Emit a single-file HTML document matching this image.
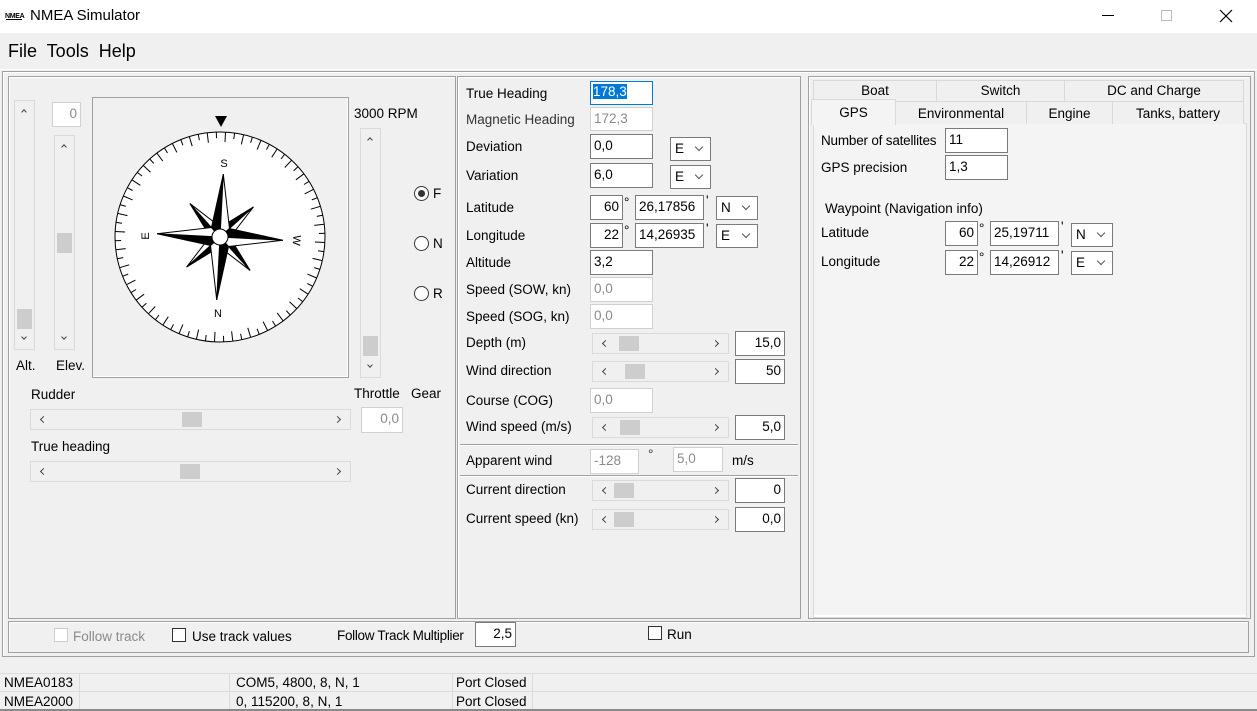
<!DOCTYPE html>
<html><head><meta charset="utf-8"><style>
*{box-sizing:border-box;margin:0;padding:0}
body{width:1257px;height:711px;overflow:hidden;background:#f0f0f0;font-family:"Liberation Sans",sans-serif;font-size:13.5px;color:#000;position:relative}
.a{position:absolute}
.t{position:absolute;white-space:nowrap;line-height:16px}
.in{position:absolute;background:#fff;border:1px solid #7a7a7a;padding:0 3px;line-height:21px;white-space:nowrap;overflow:hidden}
.dis{border-color:#d0d0d0;color:#8a8a8a}
.r{text-align:right}
.cb{position:absolute;background:#fff;border:1px solid #7a7a7a;padding:0 4px;line-height:21px}
.cb:after{content:"";position:absolute;right:8px;top:6px;width:5px;height:5px;border-right:1px solid #555;border-bottom:1px solid #555;transform:rotate(45deg)}
.hs{position:absolute;height:21px;background:#f0f0f0;border:1px solid #dadada}
.hs .th{position:absolute;top:2px;width:20px;height:15px;background:#cdcdcd}
.hs:before{content:"";position:absolute;left:10px;top:7px;width:4px;height:4px;border-left:1.3px solid #444;border-bottom:1.3px solid #444;transform:rotate(45deg)}
.hs:after{content:"";position:absolute;right:10px;top:7px;width:4px;height:4px;border-right:1.3px solid #444;border-top:1.3px solid #444;transform:rotate(45deg)}
.vs{position:absolute;width:21px;background:#f0f0f0;border:1px solid #dadada}
.vs .th{position:absolute;left:2px;width:15px;height:20px;background:#cdcdcd}
.vs .u,.vs .d{position:absolute;left:7px;width:4px;height:4px;border-left:1.3px solid #444;border-top:1.3px solid #444}
.vs .u{transform:rotate(45deg)}
.vs .d{transform:rotate(225deg)}
.fr{position:absolute;border:1px solid #a0a0a0;box-shadow:inset 1px 1px 0 #fff}
.tab{position:absolute;border:1px solid #d9d9d9;border-bottom:none;background:#f0f0f0;text-align:center;line-height:20px}
.chk{position:absolute;width:14px;height:14px;background:#fff;border:1px solid #333}
.rad{position:absolute;width:15px;height:15px;border:1px solid #333;border-radius:50%;background:#fff}
</style></head><body>
<div class="a" style="left:0;top:0;width:1257px;height:33px;background:#fff"></div>
<div class="t" style="left:5px;top:9px;font-size:7px;font-weight:bold;letter-spacing:-0.3px">NMEA</div>
<div class="a" style="left:6px;top:19px;width:16px;height:1px;background:#000"></div>
<div class="t" style="left:30px;top:8px;font-size:15px">NMEA Simulator</div>
<div class="a" style="left:1102px;top:15px;width:12px;height:1px;background:#000"></div>
<div class="a" style="left:1161px;top:10px;width:11px;height:11px;border:1px solid #bbb"></div>
<svg class="a" style="left:1219px;top:9px" width="14" height="14"><path d="M1 1L13 13M13 1L1 13" stroke="#000" stroke-width="1.2"/></svg>
<div class="t" style="left:8px;top:41px;font-size:18px;line-height:20px">File&nbsp; Tools&nbsp; Help</div>
<div class="a" style="left:0;top:69px;width:1257px;height:1px;background:#fff"></div>
<div class="fr" style="left:2px;top:71px;width:1253px;height:586px"></div>
<div class="fr" style="left:8px;top:76px;width:448px;height:543px"></div>
<div class="vs" style="left:14px;top:100px;height:250px"><div class="u" style="top:9px"></div><div class="th" style="top:208px"></div><div class="d" style="top:234px"></div></div>
<div class="in dis r" style="left:52px;top:102px;width:29px;height:25px">0</div>
<div class="vs" style="left:54px;top:135px;height:215px"><div class="u" style="top:9px"></div><div class="th" style="top:97px"></div><div class="d" style="top:199px"></div></div>
<div class="t" style="left:16px;top:358px">Alt.</div>
<div class="t" style="left:56px;top:358px">Elev.</div>
<div class="a" style="left:92px;top:97px;width:257px;height:281px;border:1px solid #a0a0a0;box-shadow:inset -1px -1px 0 #fff"></div>
<svg class="a" style="left:92px;top:97px" width="257" height="281" viewBox="92 97 257 281">
<polygon points="215,116 227,116 221,127" fill="#000"/>
<circle cx="220" cy="237" r="105" fill="#fff" stroke="#000" stroke-width="1"/>
<g id="ticks" stroke="#000" stroke-width="1"></g>
<text x="224" y="167" font-size="11" text-anchor="middle" font-family="Liberation Sans">S</text>
<text x="218" y="317" font-size="11" text-anchor="middle" font-family="Liberation Sans">N</text>
<text transform="translate(149,236) rotate(-90)" font-size="11" text-anchor="middle" font-family="Liberation Sans">E</text>
<text transform="translate(293,240) rotate(95)" font-size="11" text-anchor="middle" font-family="Liberation Sans">W</text>
<g transform="translate(220,237) rotate(183)" stroke="#000" stroke-width="1">
<g id="rose"></g>
<circle r="8" fill="#fff"/>
</g>
</svg>
<div class="t" style="left:354px;top:106px">3000 RPM</div>
<div class="vs" style="left:360px;top:128px;height:250px"><div class="u" style="top:9px"></div><div class="th" style="top:207px"></div><div class="d" style="top:234px"></div></div>
<div class="rad" style="left:414px;top:186px"></div><div class="a" style="left:418px;top:190px;width:7px;height:7px;border-radius:50%;background:#333"></div>
<div class="t" style="left:433px;top:186px">F</div>
<div class="rad" style="left:414px;top:236px"></div><div class="t" style="left:433px;top:236px">N</div>
<div class="rad" style="left:414px;top:286px"></div><div class="t" style="left:433px;top:286px">R</div>
<div class="t" style="left:354px;top:386px">Throttle</div><div class="t" style="left:411px;top:386px">Gear</div>
<div class="t" style="left:31px;top:387px">Rudder</div>
<div class="hs" style="left:30px;top:409px;width:321px"><div class="th" style="left:151px"></div></div>
<div class="in dis r" style="left:361px;top:407px;width:42px;height:26px">0,0</div>
<div class="t" style="left:31px;top:439px">True heading</div>
<div class="hs" style="left:30px;top:461px;width:321px"><div class="th" style="left:149px"></div></div>
<div class="fr" style="left:457px;top:76px;width:344px;height:543px"></div>
<div class="t" style="left:466px;top:86px">True Heading</div>
<div class="in" style="left:590px;top:81px;width:63px;height:24px;border-color:#0078d7;line-height:20px;padding-left:2px"><span style="background:#0078d7;color:#fff">178,3</span></div>
<div class="t" style="left:466px;top:112px;color:#333">Magnetic Heading</div>
<div class="in dis" style="left:590px;top:107px;width:63px;height:24px">172,3</div>
<div class="t" style="left:466px;top:139px">Deviation</div>
<div class="in" style="left:590px;top:134px;width:63px;height:25px">0,0</div>
<div class="cb" style="left:670px;top:137px;width:41px;height:24px">E</div>
<div class="t" style="left:466px;top:168px">Variation</div>
<div class="in" style="left:590px;top:163px;width:63px;height:25px">6,0</div>
<div class="cb" style="left:670px;top:165px;width:41px;height:24px">E</div>
<div class="t" style="left:466px;top:200px">Latitude</div>
<div class="in r" style="left:590px;top:195px;width:33px;height:25px">60</div><div class="t" style="left:624px;top:195px">°</div>
<div class="in" style="left:635px;top:195px;width:69px;height:25px">26,17856</div><div class="t" style="left:706px;top:193px">'</div>
<div class="cb" style="left:716px;top:196px;width:42px;height:24px">N</div>
<div class="t" style="left:466px;top:228px">Longitude</div>
<div class="in r" style="left:590px;top:223px;width:33px;height:25px">22</div><div class="t" style="left:624px;top:223px">°</div>
<div class="in" style="left:635px;top:223px;width:69px;height:25px">14,26935</div><div class="t" style="left:706px;top:221px">'</div>
<div class="cb" style="left:716px;top:224px;width:42px;height:24px">E</div>
<div class="t" style="left:466px;top:255px">Altitude</div>
<div class="in" style="left:590px;top:250px;width:63px;height:25px">3,2</div>
<div class="t" style="left:466px;top:282px">Speed (SOW, kn)</div>
<div class="in dis" style="left:590px;top:277px;width:63px;height:25px">0,0</div>
<div class="t" style="left:466px;top:309px">Speed (SOG, kn)</div>
<div class="in dis" style="left:590px;top:304px;width:63px;height:25px">0,0</div>
<div class="t" style="left:466px;top:335px">Depth (m)</div>
<div class="hs" style="left:592px;top:333px;width:137px"><div class="th" style="left:26px"></div></div>
<div class="in r" style="left:735px;top:331px;width:50px;height:25px">15,0</div>
<div class="t" style="left:466px;top:363px">Wind direction</div>
<div class="hs" style="left:592px;top:361px;width:137px"><div class="th" style="left:32px"></div></div>
<div class="in r" style="left:735px;top:359px;width:50px;height:25px">50</div>
<div class="t" style="left:466px;top:393px">Course (COG)</div>
<div class="in dis" style="left:590px;top:388px;width:63px;height:25px">0,0</div>
<div class="t" style="left:466px;top:419px">Wind speed (m/s)</div>
<div class="hs" style="left:592px;top:417px;width:137px"><div class="th" style="left:27px"></div></div>
<div class="in r" style="left:735px;top:415px;width:50px;height:25px">5,0</div>
<div class="a" style="left:460px;top:444px;width:338px;height:2px;border-top:1px solid #a0a0a0;border-bottom:1px solid #fff"></div>
<div class="t" style="left:466px;top:453px">Apparent wind</div>
<div class="in dis" style="left:590px;top:449px;width:49px;height:25px">-128</div>
<div class="t" style="left:648px;top:447px;color:#333">°</div>
<div class="in dis" style="left:673px;top:447px;width:50px;height:25px">5,0</div>
<div class="t" style="left:732px;top:453px">m/s</div>
<div class="a" style="left:460px;top:475px;width:338px;height:2px;border-top:1px solid #a0a0a0;border-bottom:1px solid #fff"></div>
<div class="t" style="left:466px;top:482px">Current direction</div>
<div class="hs" style="left:592px;top:480px;width:137px"><div class="th" style="left:21px"></div></div>
<div class="in r" style="left:735px;top:478px;width:50px;height:25px">0</div>
<div class="t" style="left:466px;top:511px">Current speed (kn)</div>
<div class="hs" style="left:592px;top:509px;width:137px"><div class="th" style="left:21px"></div></div>
<div class="in r" style="left:735px;top:507px;width:50px;height:25px">0,0</div>
<div class="fr" style="left:808px;top:76px;width:443px;height:543px"></div>
<div class="a" style="left:813px;top:123px;width:434px;height:495px;background:#f4f4f4;border:1px solid #dadada;box-shadow:inset 0 -2px 0 #fff"></div>
<div class="tab" style="left:813px;top:80px;width:124px;height:22px">Boat</div>
<div class="tab" style="left:936px;top:80px;width:129px;height:22px">Switch</div>
<div class="tab" style="left:1064px;top:80px;width:180px;height:22px">DC and Charge</div>
<div class="tab" style="left:895px;top:101px;width:132px;height:23px;line-height:23px">Environmental</div>
<div class="tab" style="left:1026px;top:101px;width:87px;height:23px;line-height:23px">Engine</div>
<div class="tab" style="left:1112px;top:101px;width:132px;height:23px;line-height:23px">Tanks, battery</div>
<div class="tab" style="left:811px;top:99px;width:85px;height:26px;background:#f4f4f4;line-height:25px">GPS</div>
<div class="t" style="left:821px;top:133px;letter-spacing:-0.2px">Number of satellites</div>
<div class="in" style="left:945px;top:128px;width:63px;height:25px">11</div>
<div class="t" style="left:821px;top:160px">GPS precision</div>
<div class="in" style="left:945px;top:155px;width:63px;height:25px">1,3</div>
<div class="t" style="left:825px;top:201px">Waypoint (Navigation info)</div>
<div class="t" style="left:821px;top:225px">Latitude</div>
<div class="in r" style="left:945px;top:221px;width:33px;height:25px">60</div><div class="t" style="left:979px;top:221px">°</div>
<div class="in" style="left:990px;top:221px;width:69px;height:25px">25,19711</div><div class="t" style="left:1061px;top:219px">'</div>
<div class="cb" style="left:1071px;top:223px;width:42px;height:24px">N</div>
<div class="t" style="left:821px;top:254px">Longitude</div>
<div class="in r" style="left:945px;top:250px;width:33px;height:25px">22</div><div class="t" style="left:979px;top:250px">°</div>
<div class="in" style="left:990px;top:250px;width:69px;height:25px">14,26912</div><div class="t" style="left:1061px;top:248px">'</div>
<div class="cb" style="left:1071px;top:251px;width:42px;height:24px">E</div>
<div class="fr" style="left:8px;top:621px;width:1241px;height:32px"></div>
<div class="chk" style="left:54px;top:628px;border-color:#ccc"></div>
<div class="t" style="left:73px;top:629px;color:#8a8a8a">Follow track</div>
<div class="chk" style="left:172px;top:628px"></div>
<div class="t" style="left:192px;top:629px">Use track values</div>
<div class="t" style="left:337px;top:628px;letter-spacing:-0.3px">Follow Track Multiplier</div>
<div class="in r" style="left:475px;top:622px;width:41px;height:25px">2,5</div>
<div class="chk" style="left:648px;top:626px"></div>
<div class="t" style="left:667px;top:627px">Run</div>
<div class="a" style="left:0;top:673px;width:1257px;height:1px;background:#dcdcdc"></div>
<div class="a" style="left:0;top:691px;width:1257px;height:1px;background:#dcdcdc"></div>
<div class="a" style="left:0;top:709px;width:1257px;height:2px;background:#8a8a8a"></div>
<div class="a" style="left:79px;top:674px;width:1px;height:35px;background:#dcdcdc"></div>
<div class="a" style="left:229px;top:674px;width:1px;height:35px;background:#dcdcdc"></div>
<div class="a" style="left:452px;top:674px;width:1px;height:35px;background:#dcdcdc"></div>
<div class="a" style="left:532px;top:674px;width:1px;height:35px;background:#dcdcdc"></div>
<div class="t" style="left:4px;top:675px">NMEA0183</div>
<div class="t" style="left:236px;top:675px">COM5, 4800, 8, N, 1</div>
<div class="t" style="left:456px;top:675px">Port Closed</div>
<div class="t" style="left:4px;top:694px">NMEA2000</div>
<div class="t" style="left:236px;top:694px">0, 115200, 8, N, 1</div>
<div class="t" style="left:456px;top:694px">Port Closed</div>
<script>
var g=document.getElementById('ticks'),s='';
for(var i=0;i<72;i++){var a=(i*5+3)*Math.PI/180,l=(i%2==0)?10:6,r1=105,r2=105-l;
s+='<line x1="'+(220+r1*Math.sin(a)).toFixed(1)+'" y1="'+(237-r1*Math.cos(a)).toFixed(1)+'" x2="'+(220+r2*Math.sin(a)).toFixed(1)+'" y2="'+(237-r2*Math.cos(a)).toFixed(1)+'"/>';}
g.innerHTML=s;
var ro=document.getElementById('rose'),t='';
[[45,45,7],[135,45,7],[225,45,7],[315,45,7],[0,63,9],[90,63,9],[180,63,9],[270,63,9]].forEach(function(p){
t+='<g transform="rotate('+p[0]+')"><polygon points="0,-'+p[1]+' 0,0 -'+p[2]+',-'+p[2]+'" fill="#000"/><polygon points="0,-'+p[1]+' 0,0 '+p[2]+',-'+p[2]+'" fill="#fff"/></g>';});
ro.innerHTML=t;
</script>
</body></html>
